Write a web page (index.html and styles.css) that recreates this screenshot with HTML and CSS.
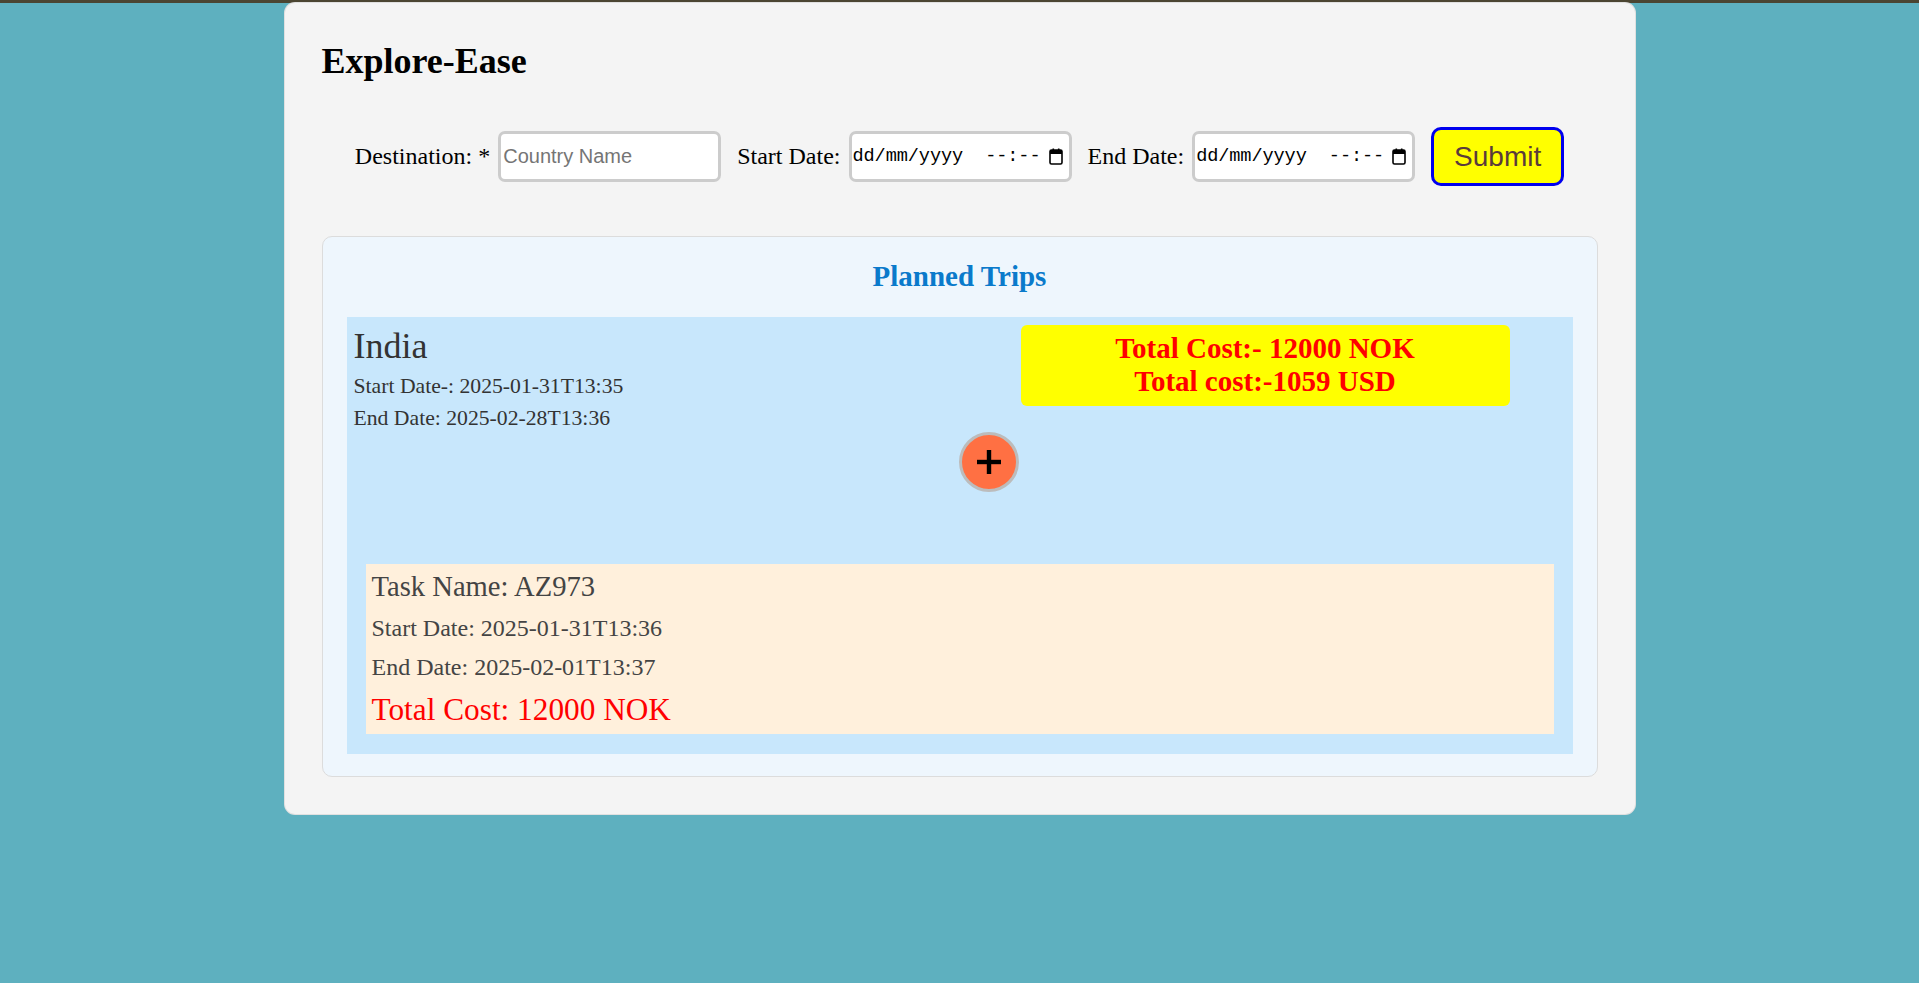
FILE: index.html
```html
<!DOCTYPE html>
<html lang="en">
<head>
<meta charset="utf-8">
<title>Explore-Ease</title>
<link rel="stylesheet" href="styles.css">
</head>
<body>
<div class="topbar"></div>
<main class="app">
  <h1 class="title">Explore-Ease</h1>
  <form class="trip-form">
    <label class="lbl" for="dest">Destination: *</label>
    <input class="field text-field" id="dest" type="text" placeholder="Country Name">
    <label class="lbl lbl-next">Start Date:</label>
    <div class="field date-field"><span class="date-text">dd/mm/yyyy  --:--</span><svg class="cal" width="14" height="17" viewBox="0 0 14 17"><rect x="1" y="2" width="12" height="14" rx="1.5" fill="none" stroke="#000" stroke-width="1.6"/><rect x="1" y="2" width="12" height="4" fill="#000"/><rect x="3.5" y="0.5" width="1.6" height="3" fill="#000"/><rect x="8.9" y="0.5" width="1.6" height="3" fill="#000"/></svg></div>
    <label class="lbl lbl-next">End Date:</label>
    <div class="field date-field"><span class="date-text">dd/mm/yyyy  --:--</span><svg class="cal" width="14" height="17" viewBox="0 0 14 17"><rect x="1" y="2" width="12" height="14" rx="1.5" fill="none" stroke="#000" stroke-width="1.6"/><rect x="1" y="2" width="12" height="4" fill="#000"/><rect x="3.5" y="0.5" width="1.6" height="3" fill="#000"/><rect x="8.9" y="0.5" width="1.6" height="3" fill="#000"/></svg></div>
    <button class="submit" type="button">Submit</button>
  </form>

  <section class="planned">
    <h2 class="planned-title">Planned Trips</h2>
    <div class="trip">
      <div class="trip-head">
        <div class="trip-info">
          <div class="trip-name">India</div>
          <div class="trip-date trip-date-start">Start Date-: 2025-01-31T13:35</div>
          <div class="trip-date trip-date-end">End Date: 2025-02-28T13:36</div>
        </div>
        <div class="cost-box">
          <div>Total Cost:- 12000 NOK</div>
          <div>Total cost:-1059 USD</div>
        </div>
      </div>
      <div class="add-row">
        <button class="add-btn" type="button" aria-label="Add task"><svg width="24" height="24" viewBox="0 0 24 24"><rect x="0" y="9.8" width="24" height="4.4" fill="#000"/><rect x="9.8" y="0" width="4.4" height="24" fill="#000"/></svg></button>
      </div>
      <div class="task">
        <div class="task-name">Task Name: AZ973</div>
        <div class="task-date">Start Date: 2025-01-31T13:36</div>
        <div class="task-date">End Date: 2025-02-01T13:37</div>
        <div class="task-cost">Total Cost: 12000 NOK</div>
      </div>
    </div>
  </section>
</main>
</body>
</html>
```

FILE: styles.css
```css
* { box-sizing: border-box; }
html, body { margin: 0; padding: 0; }
body {
  background: #5eb0bf;
  font-family: "Liberation Serif", "Times New Roman", serif;
  min-height: 983px;
}
.topbar {
  height: 3px;
  background: #4b4532;
}
.app {
  width: 1350px;
  margin: 0 auto;
  background: #f4f4f4;
  border-radius: 10px;
  box-shadow: 0 0 0 1px #e0e0e0;
  padding: 38px 37px 37px 37px;
}
.title {
  margin: 0;
  font-size: 36px;
  line-height: 40px;
  font-weight: bold;
  color: #000;
}
.trip-form {
  display: flex;
  align-items: center;
  justify-content: center;
  height: 59px;
  margin-top: 46px;
}
.lbl {
  font-size: 24px;
  color: #000;
  margin-right: 8px;
  white-space: nowrap;
}
.lbl-next { margin-left: 16px; }
.field {
  width: 223px;
  height: 51px;
  border: 3px solid #cccccc;
  border-radius: 7px;
  background: #fff;
}
.text-field {
  font-family: "Liberation Sans", Arial, sans-serif;
  font-size: 20px;
  padding: 0 2px;
  outline: none;
}
.text-field::placeholder { color: #757575; }
.date-field {
  display: flex;
  align-items: center;
  padding: 0 6px 0 1px;
}
.date-text {
  font-family: "Liberation Mono", "DejaVu Sans Mono", monospace;
  font-size: 18.6px;
  letter-spacing: -0.1px;
  white-space: pre;
  color: #000;
  flex: 1;
}
.cal { flex: 0 0 auto; }
.submit {
  margin-left: 16px;
  width: 133px;
  height: 59px;
  background: #ffff00;
  border: 3px solid #0000ee;
  border-radius: 10px;
  font-family: "Liberation Sans", Arial, sans-serif;
  font-size: 28px;
  color: #5a3b3b;
  padding: 0;
}
.planned {
  margin-top: 50px;
  background: #eef6fd;
  border: 1px solid #dcdcdc;
  border-radius: 10px;
  padding: 23px 24px 22px 24px;
}
.planned-title {
  margin: 0 0 24px 0;
  text-align: center;
  font-size: 29px;
  line-height: 33px;
  font-weight: bold;
  color: #0a7acb;
}
.trip {
  background: #c8e7fc;
  padding: 8px 8px 8px 7px;
}
.trip-head {
  display: flex;
  align-items: flex-start;
}
.trip-info {
  width: 667px;
  color: #333;
}
.trip-name {
  font-size: 36px;
  line-height: 42px;
}
.trip-date {
  font-size: 21.7px;
  line-height: 33px;
}
.trip-date-start { margin-top: 3px; }
.trip-date-end { line-height: 25.5px; margin-top: 3.4px; }
.cost-box {
  width: 489px;
  background: #ffff00;
  border-radius: 6px;
  padding: 6.5px 0 8px;
  text-align: center;
  color: #ff0000;
  font-weight: bold;
  font-size: 29px;
  line-height: 33px;
}
.add-row {
  display: flex;
  padding-left: 605px;
}
.add-btn {
  width: 60px;
  height: 60px;
  border-radius: 50%;
  background: #ff7043;
  border: 3px solid #bcbcbc;
  display: flex;
  align-items: center;
  justify-content: center;
  padding: 0;
}
.task {
  margin: 72px 11px 12px 12px;
  background: #fff0dc;
  padding: 7.2px 6px 6.3px 6px;
  color: #444;
}
.task-name {
  font-size: 28.6px;
  line-height: 32px;
}
.task-date {
  font-size: 24px;
  line-height: 28px;
  margin-top: 11px;
}
.task-cost {
  font-size: 31.3px;
  line-height: 36px;
  margin-top: 11px;
  color: #ff0000;
}
```
